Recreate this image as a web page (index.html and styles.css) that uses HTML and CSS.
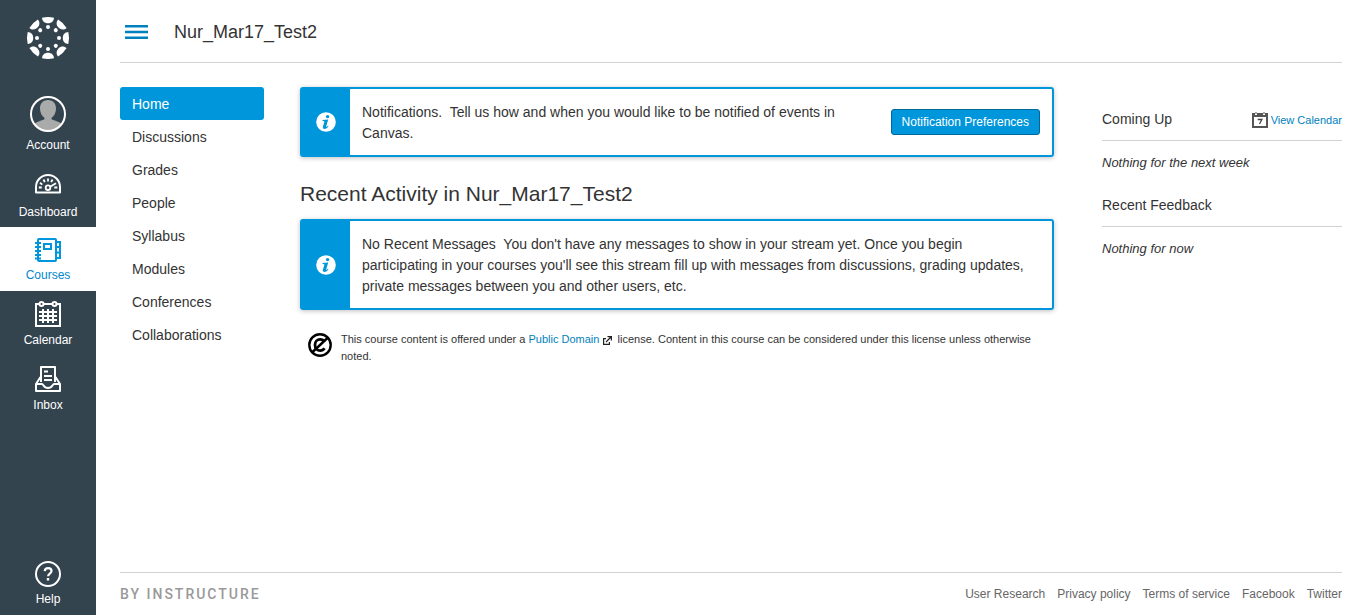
FILE: index.html
```html
<!DOCTYPE html>
<html lang="en">
<head>
<meta charset="utf-8">
<title>Nur_Mar17_Test2</title>
<link rel="stylesheet" href="styles.css">
</head>
<body>
<div class="app">
  <header class="global-nav">
    <a class="logo" href="#" aria-label="Canvas home">
      <svg width="44" height="44" viewBox="-22 -22 44 44" fill="#fff">
        <defs>
          <g id="spoke"><path d="M-6-20.300Q0-21.800 6-20.300C5.800-17 3.500-14.800 0-14.800S-5.800-17-6-20.300Z"/><circle cy="-11" r="2"/></g>
        </defs>
        <use href="#spoke"/><use href="#spoke" transform="rotate(45)"/><use href="#spoke" transform="rotate(90)"/><use href="#spoke" transform="rotate(135)"/><use href="#spoke" transform="rotate(180)"/><use href="#spoke" transform="rotate(225)"/><use href="#spoke" transform="rotate(270)"/><use href="#spoke" transform="rotate(315)"/>
      </svg>
    </a>
    <nav class="nav-list">
      <a class="nav-item nav-account" href="#">
        <svg width="36" height="36" viewBox="0 0 36 36">
          <clipPath id="face"><circle cx="18" cy="18" r="17"/></clipPath>
          <g clip-path="url(#face)" fill="#a9abab"><path d="M18 4c-5 0-8 3.500-8 8.500 0 4.500 2 7.500 4.500 9.500.3 1-.5 1.500-2 2C8 25.500 4 27 2 30v6h32v-6c-2-3-6-4.500-10.500-6-1.500-.5-2.300-1-2-2 2.500-2 4.500-5 4.500-9.500C26 7.500 23 4 18 4Z"/></g>
          <circle cx="18" cy="18" r="17" fill="none" stroke="#fff" stroke-width="2"/>
        </svg>
        <span>Account</span>
      </a>
      <a class="nav-item nav-dashboard" href="#">
        <svg width="26" height="20" viewBox="0 0 26 20" fill="none" stroke="#fff" stroke-width="1.800">
          <path d="M1 18.600V13a12 12 0 0 1 24 0v5.600Z" stroke-width="2" stroke-linejoin="round"/>
          <path d="M13 4.500v3M8.500 5.500l1.300 2.700M17.500 5.500l-1.300 2.700M5 8.800l2.300 1.800M3.800 13.500h3M19.300 13.500h3M15 12.700l6-3.500"/>
          <circle cx="13" cy="13.700" r="2.300"/>
        </svg>
        <span>Dashboard</span>
      </a>
      <a class="nav-item nav-active" href="#" aria-current="page">
        <svg width="26" height="26" viewBox="0 0 26 26" fill="none" stroke="#0096db" stroke-width="2">
          <rect x="3" y="2" width="18" height="22" rx="1"/><rect x="9" y="7" width="7" height="5"/>
          <path d="M0 6h6M0 10h6M0 14h6M0 18h6M0 21.500h6M21 5h4v16h-4M21 10h4M21 15.500h4"/>
        </svg>
        <span>Courses</span>
      </a>
      <a class="nav-item" href="#">
        <svg width="26" height="26" viewBox="0 0 26 26" fill="none" stroke="#fff" stroke-width="2">
          <path d="M4 3H1v22h24V3h-3M9 3h8M8 8v14M13 8v14M18 8v14M4 11h18M4 15h18M4 19h18"/>
          <circle cx="6.500" cy="3" r="2"/><circle cx="19.500" cy="3" r="2"/>
        </svg>
        <span>Calendar</span>
      </a>
      <a class="nav-item" href="#">
        <svg width="26" height="26" viewBox="0 0 26 26" fill="none" stroke="#fff" stroke-width="2" stroke-linejoin="round">
          <path d="M6 16V1h14v15M9 5.500h4M9 10h8M9 14h8M5.500 11 1 18v7h24v-7l-4.500-7M1 18h6c1.500 0 1.500 4 6 4s4.500-4 6-4h6"/>
        </svg>
        <span>Inbox</span>
      </a>
    </nav>
    <a class="nav-item nav-help" href="#">
      <svg width="26" height="26" viewBox="0 0 26 26" fill="none" stroke="#fff">
        <circle cx="13" cy="13" r="12" stroke-width="2"/><path d="M9.700 10.200c.2-2 1.500-3 3.400-3 2 0 3.400 1.100 3.400 2.900 0 2.700-3.400 2.500-3.400 5.200" stroke-width="2.200"/><path d="M13 17v2.500" stroke-width="2.400"/>
      </svg>
      <span>Help</span>
    </a>
  </header>

  <div class="page">
    <div class="topbar">
      <button class="menu-toggle" type="button" aria-label="Toggle course menu">
        <svg width="24" height="16" viewBox="0 0 24 16" stroke="#0081bd" stroke-width="2.600"><path d="M0 2.200h23M0 8h23M0 13.800h23"/></svg>
      </button>
      <span class="course-name">Nur_Mar17_Test2</span>
    </div>

    <div class="columns">
      <nav class="course-menu">
        <a class="menu-link menu-current" href="#" aria-current="page">Home</a>
        <a class="menu-link" href="#">Discussions</a>
        <a class="menu-link" href="#">Grades</a>
        <a class="menu-link" href="#">People</a>
        <a class="menu-link" href="#">Syllabus</a>
        <a class="menu-link" href="#">Modules</a>
        <a class="menu-link" href="#">Conferences</a>
        <a class="menu-link" href="#">Collaborations</a>
      </nav>

      <main class="content">
        <section class="notice">
          <div class="notice-mark"><svg width="20" height="20" viewBox="0 0 20 20"><circle cx="10" cy="10" r="9.800" fill="#fff"/><circle cx="11.600" cy="4.600" r="1.700" fill="#0096db"/><path d="M6.600 8.100l5.600-.6-2 7c-.2.800.3.700 1.700-.8l.6.500c-1.300 1.900-2.600 2.700-4 2.700s-1.900-.9-1.600-2.100l1.400-4.800c.2-.8-.3-1-1.800-1Z" fill="#0096db"/></svg></div>
          <div class="notice-body">
            <p class="notice-text">Notifications.&nbsp; Tell us how and when you would like to be notified of events in Canvas.</p>
            <button class="primary-button" type="button">Notification Preferences</button>
          </div>
        </section>

        <h1 class="heading">Recent Activity in Nur_Mar17_Test2</h1>

        <section class="notice">
          <div class="notice-mark"><svg width="20" height="20" viewBox="0 0 20 20"><circle cx="10" cy="10" r="9.800" fill="#fff"/><circle cx="11.600" cy="4.600" r="1.700" fill="#0096db"/><path d="M6.600 8.100l5.600-.6-2 7c-.2.800.3.700 1.700-.8l.6.500c-1.300 1.900-2.600 2.700-4 2.700s-1.900-.9-1.600-2.100l1.400-4.800c.2-.8-.3-1-1.800-1Z" fill="#0096db"/></svg></div>
          <div class="notice-body">
            <p class="notice-text">No Recent Messages&nbsp; You don't have any messages to show in your stream yet. Once you begin participating in your courses you'll see this stream fill up with messages from discussions, grading updates, private messages between you and other users, etc.</p>
          </div>
        </section>

        <div class="license">
          <svg class="license-icon" width="24" height="24" viewBox="0 0 24 24" fill="none" stroke="#000"><circle cx="12" cy="12" r="10.700" stroke-width="2.400"/><path d="M16.500 8.800C15.500 7.200 14 6.400 12.200 6.400 9.200 6.400 7 8.700 7 12s2.200 5.600 5.200 5.600c1.800 0 3.300-.8 4.300-2.400" stroke-width="2.800"/><path d="M4 19.500 20 4.500" stroke-width="2.400"/></svg>
          <p class="license-text">This course content is offered under a <a class="link" href="#">Public Domain</a> <svg class="external" width="9" height="9" viewBox="0 0 9 9" fill="none" stroke="#222" stroke-width="1.200"><path d="M3 2.600H.6v5.800h5.800V6M3 6 8 1M4.500.6h3.900v3.900"/></svg>&nbsp; license. Content in this course can be considered under this license unless otherwise noted.</p>
        </div>
      </main>

      <aside class="sidebar">
        <div class="side-head">
          <h2 class="side-title">Coming Up</h2>
          <a class="calendar-link" href="#">
            <svg width="16" height="16" viewBox="0 0 16 16"><path d="M1 4v11h14V4" fill="#fff" stroke="#555" stroke-width="2"/><path d="M0 1h3v2h2V1h6v2h2V1h3v4H0ZM3.500 0h1v2h-1ZM11.500 0h1v2h-1Z" fill="#555"/><path d="M5.700 7.500h4.200L7.500 12" fill="none" stroke="#444" stroke-width="1.300"/></svg>
            <span>View Calendar</span>
          </a>
        </div>
        <p class="side-note">Nothing for the next week</p>
        <div class="side-head"><h2 class="side-title">Recent Feedback</h2></div>
        <p class="side-note">Nothing for now</p>
      </aside>
    </div>

    <footer class="footer">
      <a class="brand" href="#">BY INSTRUCTURE</a>
      <nav class="footer-links">
        <a href="#">User Research</a>
        <a href="#">Privacy policy</a>
        <a href="#">Terms of service</a>
        <a href="#">Facebook</a>
        <a href="#">Twitter</a>
      </nav>
    </footer>
  </div>
</div>
</body>
</html>
```
FILE: styles.css
```css
* { box-sizing: border-box; }
body {
  margin: 0;
  background: #fff;
  color: #333;
  font-family: "Liberation Sans", Arial, sans-serif;
  font-size: 14px;
  line-height: 21px;
}
a { color: inherit; text-decoration: none; }
p, h1, h2 { margin: 0; font-weight: 400; }
svg { display: block; flex: none; }

.app { display: flex; min-height: 100vh; }

.global-nav {
  display: flex;
  flex-direction: column;
  flex: none;
  width: 96px;
  background: #34444f;
}
.logo { display: flex; justify-content: center; padding: 16px 0 26px; }
.nav-list { display: flex; flex-direction: column; }
.nav-item {
  display: flex;
  flex-direction: column;
  align-items: center;
  gap: 5px;
  padding: 10px 0 8px;
  color: #fff;
  font-size: 12px;
  line-height: 16px;
}
.nav-account { padding-bottom: 11px; }
.nav-dashboard { gap: 10px; padding-bottom: 7px; }
.nav-active { gap: 4px; background: #fff; color: #0088cc; }
.nav-help { gap: 4px; margin-top: auto; }

.page {
  display: flex;
  flex-direction: column;
  flex: 1;
  min-width: 0;
  padding: 0 24px;
}
.topbar {
  display: flex;
  align-items: center;
  gap: 25px;
  height: 63px;
  border-bottom: 1px solid #d0d3d6;
}
.menu-toggle {
  padding: 6px 0 4px 5px;
  border: 0;
  background: none;
  cursor: pointer;
}
.course-name { padding-top: 2px; font-size: 18px; line-height: 24px; }

.columns { display: flex; flex: 1; padding: 24px 0; }

.course-menu { flex: none; width: 144px; margin-right: 36px; }
.menu-link { display: block; padding: 7px 12px 5px; border-radius: 3px; }
.menu-current { background: #0096db; color: #fff; }

.content { flex: 1; min-width: 0; }
.notice {
  display: flex;
  border: 2px solid #0096db;
  border-radius: 3px;
  box-shadow: 0 1px 5px rgba(0, 0, 0, 0.25);
}
.notice-mark {
  display: flex;
  align-items: center;
  justify-content: center;
  flex: none;
  width: 48px;
  background: #0096db;
}
.notice-body {
  display: flex;
  align-items: center;
  flex: 1;
  gap: 24px;
  padding: 0 12px;
}
.notice-text { flex: 1; padding: 13px 0 11px; }
.primary-button {
  height: 26px;
  padding: 0 10px;
  border: 1px solid #00689a;
  border-radius: 3px;
  background: #0096db;
  color: #fff;
  font: 12px/16px "Liberation Sans", Arial, sans-serif;
}
.heading { padding: 22px 0 10px; font-size: 21px; line-height: 30px; }

.license { display: flex; gap: 9px; padding: 21px 20px 0 8px; }
.license-icon { margin-top: 2px; }
.license-text { font-size: 11px; line-height: 17px; }
.external { display: inline-block; vertical-align: -2px; }
.link { color: #0081bd; }

.sidebar { flex: none; width: 240px; margin-left: 48px; }
.side-head {
  display: flex;
  align-items: center;
  justify-content: space-between;
  padding: 22px 0 10px;
  border-bottom: 1px solid #d0d3d6;
}
.side-title { font-size: 14px; line-height: 21px; }
.calendar-link {
  display: flex;
  align-items: center;
  gap: 3px;
  color: #0081bd;
  font-size: 11px;
  line-height: 16px;
}
.side-note { padding-top: 12px; font-size: 13px; font-style: italic; line-height: 20px; }

.footer {
  display: flex;
  justify-content: space-between;
  padding: 11px 0 10px;
  border-top: 1px solid #d0d3d6;
  color: #666;
  font-size: 12px;
}
.brand {
  color: #999;
  font-family: Roboto, "Liberation Sans", sans-serif;
  font-size: 14px;
  font-weight: 500;
  letter-spacing: 2px;
}
.footer-links { display: flex; gap: 12px; }
```
